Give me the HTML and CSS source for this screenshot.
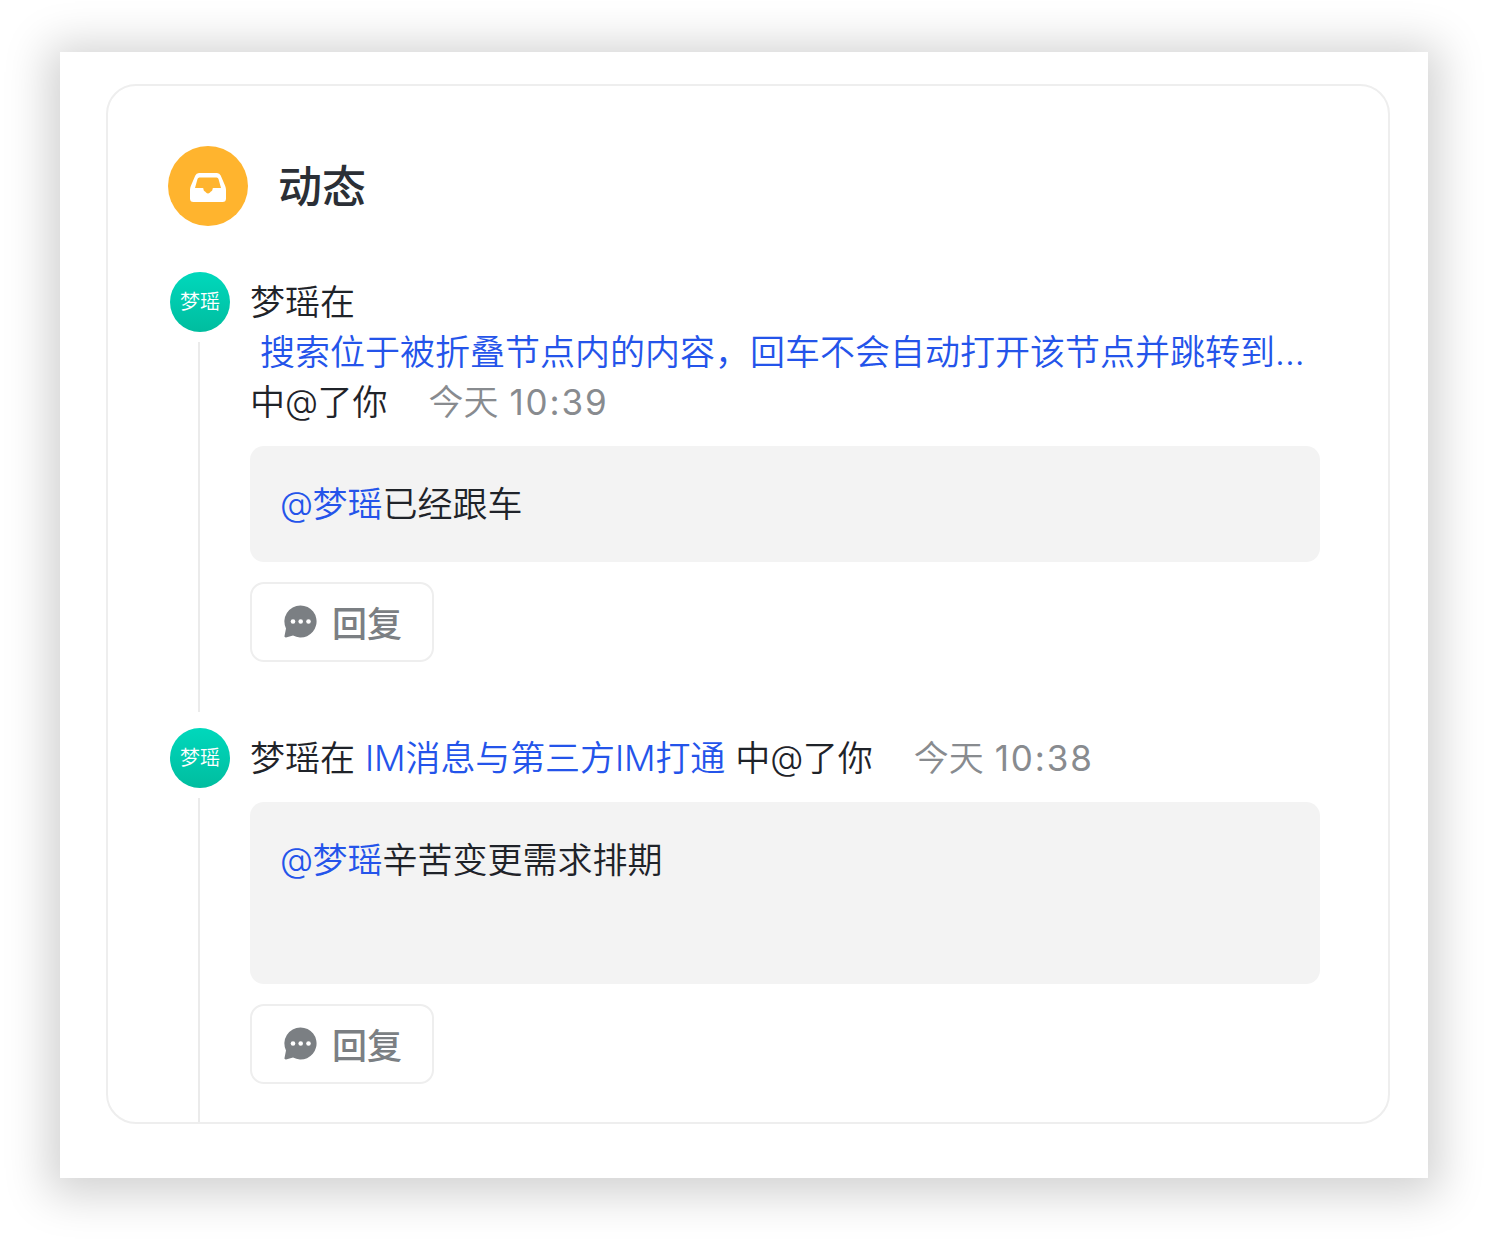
FILE: index.html
```html
<!DOCTYPE html>
<html lang="zh-CN">
<head>
  <meta charset="UTF-8">
  <meta name="viewport" content="width=device-width, initial-scale=1.0">
  <title>动态</title>
  <link rel="stylesheet" href="styles.css">
</head>
<body>
  <main class="window">
    <section class="card">
      <header class="card-header">
        <div class="card-icon">
          <svg width="36" height="29" viewBox="0 0 36 29">
            <path fill="#fff" fill-rule="evenodd" d="M9 0h18a4 4 0 0 1 3.700 2.500L35.200 13a10 10 0 0 1 .8 4v8.500a3.500 3.500 0 0 1-3.500 3.500h-29A3.500 3.500 0 0 1 0 25.500V17a10 10 0 0 1 .8-4L5.300 2.500A4 4 0 0 1 9 0zM9.500 4.500a2 2 0 0 0-2 1.500L5 15h7.500a1 1 0 0 1 1 1v.5c0 1.500 2 2 2.500 3q2 2.200 4 0c.5-1 2.500-1.500 2.500-3V16a1 1 0 0 1 1-1H31l-2.500-9a2 2 0 0 0-2-1.500z"/>
          </svg>
        </div>
        <h1>动态</h1>
      </header>

      <article class="item">
        <div class="rail">
          <div class="avatar">梦瑶</div>
          <div class="line"></div>
        </div>
        <div class="content">
          <div class="text">
            <div>梦瑶在</div>
            <div><a class="link link-long">搜索位于被折叠节点内的内容，回车不会自动打开该节点并跳转到...</a></div>
            <div>中<span class="at">@</span>了你<time>今天 <span class="clock">10:39</span></time></div>
          </div>
          <div class="bubble"><a class="link"><span class="at">@</span>梦瑶</a>已经跟车</div>
          <button class="reply">
            <svg width="34" height="34" viewBox="0 0 34 34">
              <path fill="#7b7f83" d="M17.500 .5a16 16 0 1 1-7.500 30.100L3 32.500a1.300 1.300 0 0 1-1.500-1.600L3 23.500A16 16 0 0 1 17.500 .5z"/>
              <g fill="#fff"><circle cx="10" cy="16.500" r="2.300"/><circle cx="17.700" cy="16.500" r="2.300"/><circle cx="25.500" cy="16.500" r="2.300"/></g>
            </svg>
            <span>回复</span>
          </button>
        </div>
      </article>

      <article class="item item-last">
        <div class="rail">
          <div class="avatar">梦瑶</div>
          <div class="line"></div>
        </div>
        <div class="content">
          <div class="text">
            <div>梦瑶在<a class="link link-inline">IM消息与第三方IM打通</a>中<span class="at">@</span>了你<time>今天 <span class="clock">10:38</span></time></div>
          </div>
          <div class="bubble bubble-tall"><a class="link"><span class="at">@</span>梦瑶</a>辛苦变更需求排期</div>
          <button class="reply">
            <svg width="34" height="34" viewBox="0 0 34 34">
              <path fill="#7b7f83" d="M17.500 .5a16 16 0 1 1-7.500 30.100L3 32.500a1.300 1.300 0 0 1-1.500-1.600L3 23.500A16 16 0 0 1 17.500 .5z"/>
              <g fill="#fff"><circle cx="10" cy="16.500" r="2.300"/><circle cx="17.700" cy="16.500" r="2.300"/><circle cx="25.500" cy="16.500" r="2.300"/></g>
            </svg>
            <span>回复</span>
          </button>
        </div>
      </article>
    </section>
  </main>
</body>
</html>
```
FILE: styles.css
```css
* {
  box-sizing: border-box;
}

body {
  margin: 0;
  padding: 52px 60px 68px;
  height: 1246px;
  overflow: hidden;
  background: #fff;
  color: #1f2329;
  font-family: Inter, "Noto Sans CJK SC", sans-serif;
  font-size: 35px;
  font-weight: 350;
  line-height: 50px;
}

.window {
  height: 1126px;
  padding: 32px 38px 54px 46px;
  background: #fff;
  box-shadow: 0 5px 42px 12px rgba(0, 0, 0, 0.18);
}

.card {
  display: flex;
  flex-direction: column;
  height: 1040px;
  padding: 60px 68px 0 60px;
  border: 2px solid #eee;
  border-radius: 30px;
}

.card-header {
  display: flex;
  align-items: center;
  gap: 30px;
  margin-bottom: 46px;
}

.card-icon {
  display: flex;
  align-items: center;
  justify-content: center;
  width: 80px;
  height: 80px;
  padding-top: 3px;
  border-radius: 50%;
  background: #ffb42e;
}

h1 {
  margin: 0;
  padding-top: 2px;
  font-size: 44px;
  font-weight: 500;
  line-height: 60px;
  color: #2b2f36;
}

.item {
  display: flex;
  gap: 20px;
  height: 456px;
  padding-left: 2px;
}

.item-last {
  height: auto;
  flex: 1;
}

.rail {
  display: flex;
  flex-direction: column;
  align-items: center;
  width: 60px;
}

.avatar {
  width: 60px;
  height: 60px;
  border-radius: 50%;
  background: linear-gradient(#00d8bc, #00bd9f);
  color: #fff;
  font-size: 20px;
  line-height: 61px;
  text-align: center;
}

.line {
  flex: 1;
  width: 2px;
  margin: 10px 2px 16px 0;
  background: #ebebeb;
}

.item-last .line {
  margin-bottom: 0;
}

.content {
  flex: 1;
  min-width: 0;
  padding-top: 5px;
}

.text {
  margin-bottom: 19px;
  white-space: nowrap;
}

.at {
  font-size: 34px;
  line-height: 1;
  letter-spacing: -0.5px;
  vertical-align: 1px;
}

.link {
  color: #2454ea;
}

.link-long {
  margin-left: 10px;
}

.link-inline {
  margin: 0 10px;
  letter-spacing: -0.1px;
}

time {
  margin-left: 41px;
  color: #888b8f;
}

.clock {
  margin-left: 1px;
  font-weight: 400;
  letter-spacing: 1.9px;
}

.bubble {
  height: 116px;
  padding: 33px 30px;
  border-radius: 14px;
  background: #f3f3f3;
}

.bubble-tall {
  height: 182px;
}

.reply {
  display: flex;
  align-items: center;
  gap: 15px;
  width: 184px;
  height: 80px;
  margin-top: 20px;
  padding: 0 0 0 31px;
  border: 2px solid #eee;
  border-radius: 14px;
  background: #fff;
  color: #7b7f83;
  font: inherit;
  font-weight: 500;
}

.reply span {
  padding-top: 3px;
}
```
